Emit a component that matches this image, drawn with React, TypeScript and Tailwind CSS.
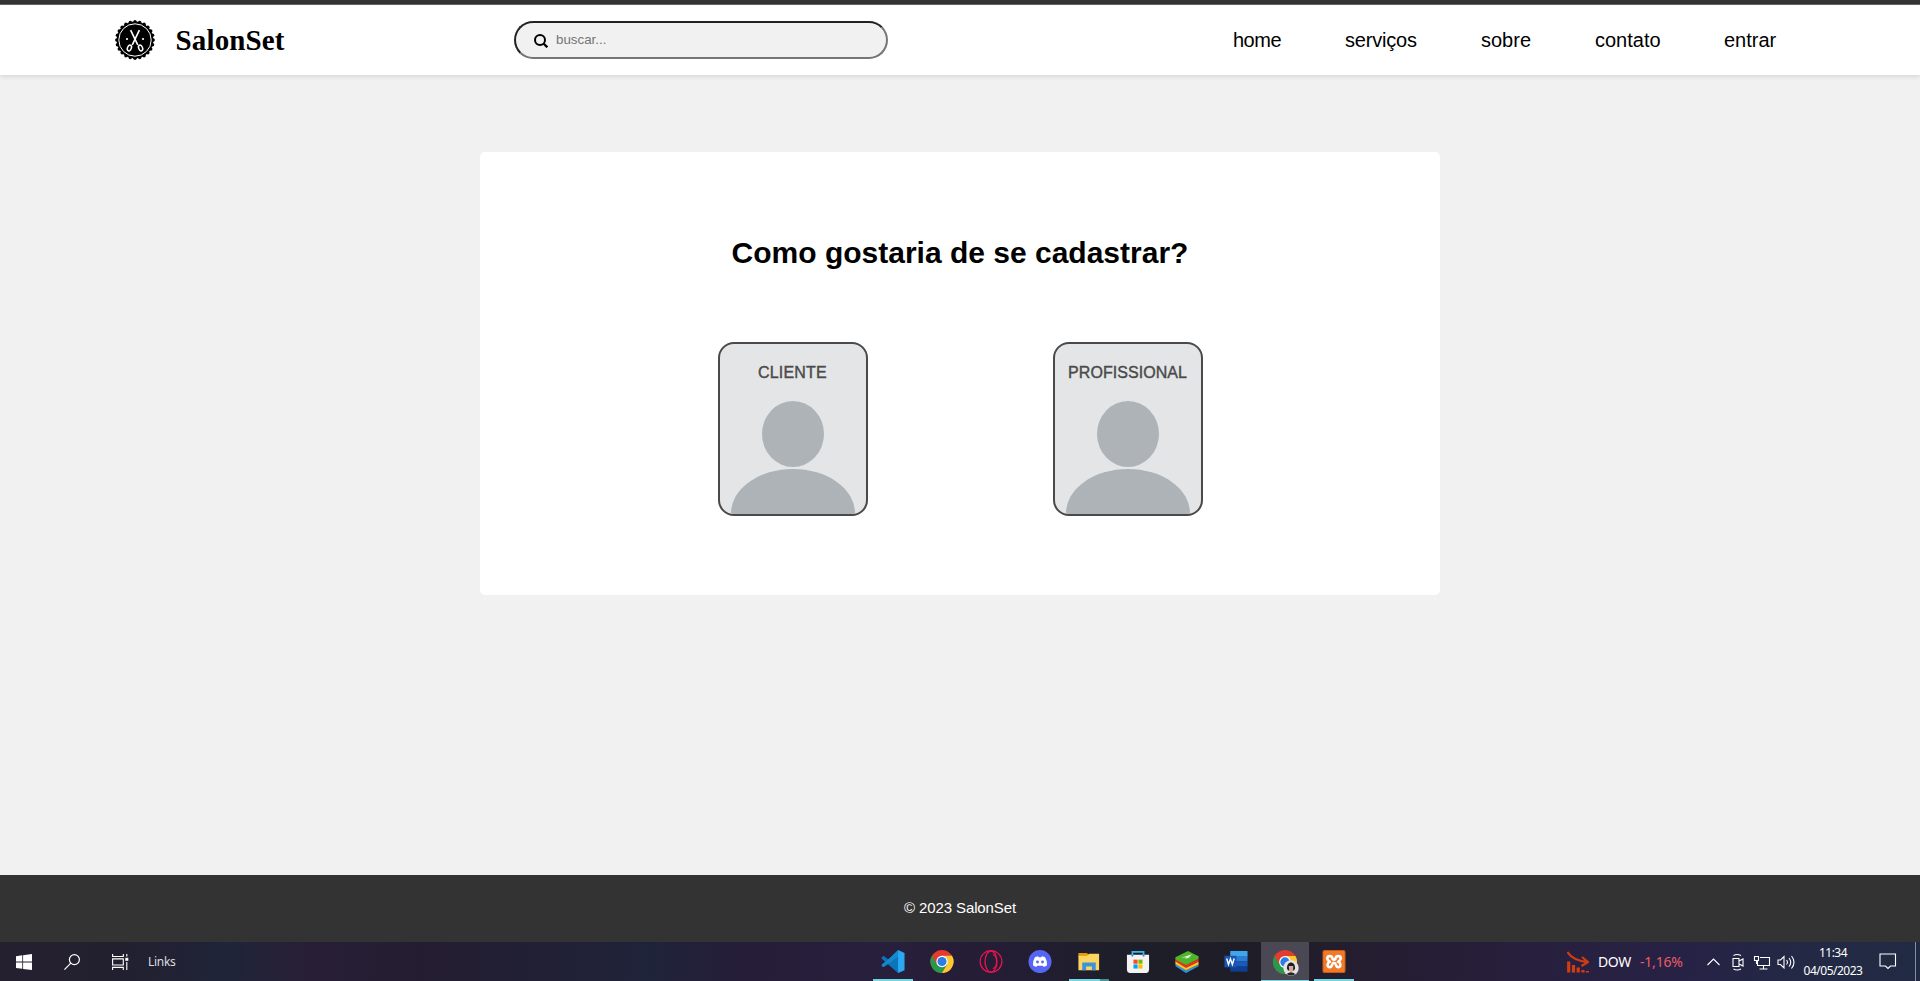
import React from "react";

const nav = [
  { label: "home", cls: "w-[112px] tracking-[-0.5px]" },
  { label: "serviços", cls: "w-[136px] tracking-[-0.2px]" },
  { label: "sobre", cls: "w-[114px] tracking-[0px]" },
  { label: "contato", cls: "w-[129px] tracking-[0px]" },
  { label: "entrar", cls: "w-[60px] tracking-[0px]" },
];

function Badge() {
  const teeth = Array.from({ length: 24 }, (_, i) => (i * Math.PI) / 12);
  return (
    <svg viewBox="0 0 40 40" className="size-10">
      <circle cx="20" cy="20" r="18.4" fill="#000" />
      {teeth.map((a) => (
        <circle key={a} cx={20 + 18.2 * Math.cos(a)} cy={20 + 18.2 * Math.sin(a)} r="1.7" fill="#000" />
      ))}
      <circle cx="20" cy="20" r="16.2" fill="none" stroke="#fff" strokeWidth="1" />
      <g fill="none" stroke="#fff" strokeWidth="1.5">
        <path d="M15.6 10.2 L22.8 25 M24.4 10.2 L17.2 25" strokeWidth="1.7" />
        <ellipse cx="14.4" cy="28" rx="1.9" ry="3" transform="rotate(22 14.4 28)" />
        <ellipse cx="25.6" cy="28" rx="1.9" ry="3" transform="rotate(-22 25.6 28)" />
      </g>
      <circle cx="12" cy="19" r="1.1" fill="#fff" />
      <circle cx="28" cy="19" r="1.1" fill="#fff" />
    </svg>
  );
}

function ProfileCard({ label, spacing }: { label: string; spacing: string }) {
  return (
    <button className="flex h-[174px] w-[150px] flex-col items-center overflow-hidden rounded-[16px] border-2 border-[#4a4a4a] bg-[#e4e5e7]">
      <span className={"mt-[19px] h-[21px] whitespace-nowrap text-[16px] leading-[20px] text-[#4a4a4a] [-webkit-text-stroke:0.4px_#4a4a4a] " + spacing}>{label}</span>
      <svg viewBox="0 0 146 130" className="h-[130px] w-[146px] shrink-0" fill="#aeb3b7">
        <ellipse cx="73" cy="50" rx="31" ry="33" />
        <ellipse cx="73" cy="129" rx="62" ry="44" />
      </svg>
    </button>
  );
}

const VSCode = () => (
  <svg viewBox="0 0 24 24" className="size-6">
    <path d="M17.5 0 L7 9.8 L2.5 6.3 L0.3 7.4 V9 L17.3 24 L18.5 19.5 V17.3 Z" fill="#0b75b8" />
    <path d="M17.3 0 L7 9.8 L.3 15.2 V16.8 L2.5 17.8 L18 6.5 Z" fill="#1389cf" />
    <path d="M17.3 0 L24 3 V21 L17.3 24 Z" fill="#2aa9f2" />
  </svg>
);

const Chrome = () => (
  <svg viewBox="0 0 24 24" className="size-6">
    <circle cx="12" cy="12" r="12" fill="#e33b2e" />
    <path d="M1.6 6 A12 12 0 0 0 12 24 L17.2 15 L6.8 15 Z" fill="#27994a" />
    <path d="M12 24 A12 12 0 0 0 22.4 6 H12 L17.2 15 Z" fill="#fcc934" />
    <circle cx="12" cy="12" r="5.9" fill="#fff" />
    <circle cx="12" cy="12" r="4.7" fill="#2a7de9" />
  </svg>
);

const Opera = () => (
  <svg viewBox="0 0 24 24" className="size-6" fill="none" stroke="#e0164c">
    <circle cx="12" cy="12" r="11.3" strokeWidth="1.3" />
    <ellipse cx="12" cy="12" rx="6.2" ry="11" strokeWidth="1.4" />
    <path d="M14 4.5 C19 7 19 17 14 19.5" strokeWidth="1.1" />
  </svg>
);

const Discord = () => (
  <svg viewBox="0 0 24 24" className="size-6">
    <circle cx="12" cy="12" r="12" fill="#5865f2" />
    <path d="M7 7.4 L10 6.5 L10.7 7.5 H13.3 L14 6.5 L17 7.4 C18.8 10 19.5 12.7 19.2 16 L16 17.8 L15 16.3 H9 L8 17.8 L4.8 16 C4.5 12.7 5.2 10 7 7.4Z" fill="#fff" />
    <circle cx="9.4" cy="12.5" r="1.5" fill="#5865f2" />
    <circle cx="14.6" cy="12.5" r="1.5" fill="#5865f2" />
  </svg>
);

const Folder = () => (
  <svg viewBox="0 0 24 24" className="size-6">
    <path d="M1 3 H10 L11.5 5 V7 H1Z" fill="#e29a09" />
    <path d="M1 6 H10 L12 4 H22.5 V21 H1Z" fill="#fcd462" />
    <path d="M5 13 H19 V21 H15 V17.2 H9 V21 H5Z" fill="#3b93dc" />
  </svg>
);

const Store = () => (
  <svg viewBox="0 0 24 24" className="size-6">
    <path d="M6.2 6 V2 H17.8 V6" fill="none" stroke="#35b8f5" strokeWidth="1.8" />
    <path d="M.5 5 H23.5 V20.5 Q23.5 24 20 24 H4 Q.5 24 .5 20.5Z" fill="#f3f3f3" />
    <path d="M5.3 5 h1.8 v1.800 h-1.800z M16.900 5 h1.800 v1.800 h-1.800z" fill="#1b86cf" />
    <path d="M7.3 10 h4.3 v4.3 h-4.3z" fill="#f25022" />
    <path d="M12.4 10 h4.3 v4.3 h-4.3z" fill="#7fba00" />
    <path d="M7.3 15 h4.3 v4.3 h-4.3z" fill="#00a4ef" />
    <path d="M12.4 15 h4.3 v4.3 h-4.3z" fill="#ffb900" />
  </svg>
);

const BlueStacks = () => (
  <svg viewBox="0 0 24 24" className="size-6">
    <path d="M0 13 L11 21 L24 15 V17 L11 24 L0 17Z" fill="#2f8fe0" />
    <path d="M0 11 L11 18 L24 12 V15 L11 21 L0 14.5Z" fill="#fcc61c" />
    <path d="M0 8 L11 15 L24 9 V12.3 L11 18.6 L0 12Z" fill="#e2331f" />
    <path d="M0 7.5 L13 1 L24 6.5 V9 L11 15.5 L0 10Z" fill="#4fb52a" />
    <path d="M6 8 L17 4.5 L14 8 L10 9 L11 7.500Z" fill="#dff5d3" />
  </svg>
);

const Word = () => (
  <svg viewBox="0 0 24 24" className="size-6">
    <path d="M6 1 H24 V7 H6Z" fill="#41a5ee" />
    <path d="M6 6.5 H24 V12 H6Z" fill="#2b7cd3" />
    <path d="M6 12 H24 V17.3 H6Z" fill="#185abd" />
    <path d="M6 17.3 H24 V22.5 H6Z" fill="#103f91" />
    <path d="M0 6 H12.5 V18 H0Z" fill="#1956b3" />
    <path d="M2.3 8.8 L4.2 15 L6.2 9.2 L8.2 15 L10.1 8.8" fill="none" stroke="#fff" strokeWidth="1.5" />
  </svg>
);

const ChromeProfile = () => (
  <div className="relative size-6">
    <Chrome />
    <svg viewBox="0 0 16 16" className="absolute top-[10px] left-[10px] size-4">
      <circle cx="8" cy="8" r="7.7" fill="#e4e2e2" />
      <path d="M4 8.5 C3.500 0.500 12.500 0.500 12 8.5 L11 10.500 H5Z" fill="#211d20" />
      <path d="M5.800 6 H10.300 L10 10.500 L8.2 12.4 L6.2 10.500Z" fill="#d3aa9c" />
      <path d="M3.6 14 Q8 10.500 12.4 14 Q8 17.2 3.6 14Z" fill="#292427" />
    </svg>
  </div>
);

const Xampp = () => (
  <svg viewBox="0 0 24 24" className="size-6">
    <rect width="24" height="24" rx="2.2" fill="#c55a19" />
    <rect x="1" y="1" width="22" height="22" rx="1.6" fill="#f07a28" />
    <path d="M10.300 8.500 C9.800 5.600 5 5.600 5 8.500 C5 10.800 7 11.300 7.500 12.200 C5 13 4.500 17.700 7.300 17.900 C10.800 18 9.300 13.300 12 13.300 C14.700 13.300 13.200 18 16.700 17.900 C19.500 17.700 19 13 16.500 12.200 C17 11.300 19 10.800 19 8.500 C19 5.600 14.200 5.600 13.700 8.500 C13.500 10.500 10.500 10.500 10.300 8.500Z" fill="none" stroke="#fff" strokeWidth="2.700" />
  </svg>
);

const apps = [
  { icon: <VSCode />, cls: "", bar: "w-10 bg-[#76d6e0]" },
  { icon: <Chrome />, cls: "", bar: "" },
  { icon: <Opera />, cls: "", bar: "" },
  { icon: <Discord />, cls: "", bar: "" },
  { icon: <Folder />, cls: "", bar: "w-10 bg-linear-to-r from-[#76d6e0] from-78% to-[#4b8f98] to-78%" },
  { icon: <Store />, cls: "", bar: "" },
  { icon: <BlueStacks />, cls: "", bar: "" },
  { icon: <Word />, cls: "", bar: "" },
  { icon: <ChromeProfile />, cls: "bg-[#4b4855]", bar: "w-12 bg-[#76d6e0]" },
  { icon: <Xampp />, cls: "", bar: "w-10 bg-[#76d6e0]" },
];

function Taskbar() {
  return (
    <div className="flex h-[39px] w-full bg-[linear-gradient(90deg,#25202f_0%,#22202f_6%,#1f2438_12%,#281f36_16%,#241d31_22%,#1f2339_34%,#261d39_39%,#281f3c_46%,#241d35_52%,#1e1e2a_58%,#1e1d27_65%,#251d30_71%,#282040_82%,#262245_88%,#232945_94%,#212a43_100%)] font-['Noto_Sans',sans-serif] text-white">
      <div className="flex w-[869px] items-center">
        <svg viewBox="0 0 16 16" className="ml-4 size-4" fill="#fff">
          <path d="M0 2.2 L6.3 1.3 V7.6 H0Z M7.1 1.2 L16 0 V7.6 H7.1Z M0 8.4 H6.3 V14.8 L0 13.9Z M7.1 8.4 H16 V16 L7.1 14.9Z" />
        </svg>
        <svg viewBox="0 0 16 16" className="ml-8 size-4" fill="none" stroke="#fff" strokeWidth="1.2">
          <circle cx="10.4" cy="5.6" r="5" />
          <path d="M6.8 9.2 L.4 15.6" />
        </svg>
        <svg viewBox="0 0 17 16" className="ml-8 h-4 w-[17px]" fill="none" stroke="#fff" strokeWidth="1.1">
          <path d="M.6 0 V2.5 H11.3 V0 M.6 4.9 H11.3 V11 H.6Z M.6 16 V13.4 H11.3 V16 M14.8 0 V2.500 M14.800 8 V16" />
          <rect x="13.3" y="3.8" width="3" height="3" fill="#fff" stroke="none" />
        </svg>
        <span className="ml-[19px] text-[12px] tracking-[-0.3px] text-[#dcdce0]">Links</span>
      </div>
      <div className="flex">
        {apps.map((a, i) => (
          <div key={i} className={"mr-px flex w-12 flex-col items-center pt-[8px] " + a.cls}>
            {a.icon}
            <div className={"mt-[6px] h-[2px] " + a.bar} />
          </div>
        ))}
      </div>
      <div className="flex grow items-center">
        <svg viewBox="0 0 22 22" className="ml-[208px] size-[22px]" fill="none" stroke="#d23c12">
          <path d="M.5 1 Q5 9 20 11 M15 6 L21 11 L14.5 15" strokeWidth="2.2" />
          <path d="M1.7 10.5 V21.5 M6.5 14 V21.5 M11.2 16.5 V21.5 M16 19 V21.5 M20.5 20 V21.5" strokeWidth="3.2" />
        </svg>
        <span className="ml-[9px] w-[42px] text-[14px] tracking-[-0.4px]">DOW</span>
        <span className="w-[61px] text-[14px] tracking-[-0.2px] text-[#ee5b64]">-1,16%</span>
        <svg viewBox="0 0 100 20" className="h-5 w-[100px] shrink-0" fill="none" stroke="#fff" strokeWidth="1.1">
          <path d="M6.5 13 L12.5 7 L18.500 13" />
          <path d="M32 6.500 h6 v8 h-6z M38 9 L42 7 V14 L38 12 M32.500 3.500 Q36 1.500 40 3.500 M32.500 17 Q36 19 40 17" />
          <path d="M59 5.500 H68.500 V13.500 H56.500 V9 M62.500 13.500 V17 M58.500 17 H66.500 M53.500 4.500 H57.500 V8.500 H53.500Z M55.500 8.500 V12" />
          <path d="M77 8 H79.500 L83 4.500 V16 L79.500 12.500 H77Z M85.500 8 Q87.500 10.200 85.500 12.500 M88 6 Q91.500 10.200 88 14.500 M90.500 4 Q95.500 10.200 90.500 16.500" />
        </svg>
        <div className="flex w-[64px] flex-col items-center text-[12px] leading-[18px] tracking-[-0.5px] whitespace-nowrap">
          <span>11:34</span>
          <span>04/05/2023</span>
        </div>
        <svg viewBox="0 0 18 17" className="ml-[14px] h-[17px] w-[18px]" fill="none" stroke="#fff" strokeWidth="1.1">
          <path d="M1 1 H16.500 V13 H11.500 L9 15.500 L6.500 13 H1Z" />
        </svg>
        <div className="ml-auto mr-[4px] h-full w-px bg-[#8a8c9c]" />
      </div>
    </div>
  );
}

export default function App() {
  return (
    <div className="flex h-[981px] w-[1920px] flex-col overflow-hidden bg-[#f1f1f1] font-['Liberation_Sans',Arial,sans-serif] text-black">
      <div className="h-[5px] shrink-0 border-b border-[#666] bg-[#333]" />
      <header className="flex h-[70px] shrink-0 items-center bg-white shadow-[0_2px_4px_rgba(0,0,0,0.1)]">
        <div className="ml-[115px] flex w-[399px] items-center gap-[20.5px]">
          <Badge />
          <span className="font-['Liberation_Serif',serif] text-[29px] leading-[34px] font-bold tracking-[0.15px]">SalonSet</span>
        </div>
        <div className="flex h-[38px] w-[374px] items-center rounded-full border-2 border-t-[#222] border-r-[#767676] border-b-[#767676] border-l-[#222] bg-[#f1f1f1] pl-[18px]">
          <svg viewBox="0 0 14 14" className="mt-px size-[14px]" fill="none" stroke="#000" strokeWidth="2">
            <circle cx="6" cy="6" r="5" />
            <path d="M9.500 9.500 L13.300 13.300" strokeWidth="2.300" />
          </svg>
          <span className="ml-[8px] text-[13.333px] text-[#757575]">buscar...</span>
        </div>
        <nav className="ml-[345px] flex text-[20px]">
          {nav.map((n) => (
            <a key={n.label} className={"whitespace-nowrap " + n.cls}>{n.label}</a>
          ))}
        </nav>
      </header>
      <main className="flex grow justify-center pt-[77px]">
        <section className="flex h-[443px] w-[960px] flex-col items-center rounded-[5px] bg-white">
          <h1 className="mt-[83px] text-[30px] leading-[36px] font-bold">Como gostaria de se cadastrar?</h1>
          <div className="mt-[71px] flex gap-[185px]">
            <ProfileCard label="CLIENTE" spacing="tracking-[0.2px]" />
            <ProfileCard label="PROFISSIONAL" spacing="tracking-[0.05px]" />
          </div>
        </section>
      </main>
      <footer className="flex h-[67px] shrink-0 items-center justify-center bg-[#333] text-[15px] tracking-[-0.1px] text-white">© 2023 SalonSet</footer>
      <Taskbar />
    </div>
  );
}
